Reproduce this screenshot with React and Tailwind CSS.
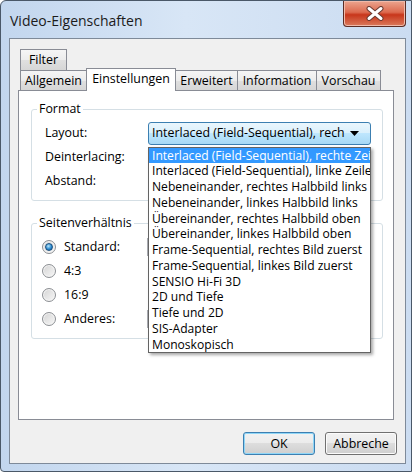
const layouts = [
  'Interlaced (Field-Sequential), rechte Zeile zuerst',
  'Interlaced (Field-Sequential), linke Zeile zuerst',
  'Nebeneinander, rechtes Halbbild links',
  'Nebeneinander, linkes Halbbild links',
  'Übereinander, rechtes Halbbild oben',
  'Übereinander, linkes Halbbild oben',
  'Frame-Sequential, rechtes Bild zuerst',
  'Frame-Sequential, linkes Bild zuerst',
  'SENSIO Hi-Fi 3D',
  '2D und Tiefe',
  'Tiefe und 2D',
  'SIS-Adapter',
  'Monoskopisch',
];

const tabGradient = 'bg-[linear-gradient(#f5f5f5,#ececec_50%,#e0e0e0_50%,#d6d6d6)]';
const btnGradient = 'bg-[linear-gradient(#f2f2f2,#ebebeb_50%,#dddddd_50%,#cfcfcf)]';

function Tab({ label, className = '' }) {
  return (
    <div className={`h-[20px] border border-b-0 border-[#898c95] ${tabGradient} flex items-center justify-center pt-[1px] whitespace-nowrap ${className}`}>
      {label}
    </div>
  );
}

function Group({ label, className = '', children }) {
  return (
    <div className={`relative border border-[#d5dfe5] rounded-[3px] ${className}`}>
      <span className="absolute left-[5px] -top-[9px] px-[2px] bg-white leading-[16px]">{label}</span>
      {children}
    </div>
  );
}

function Radio({ checked, label, withBox }) {
  return (
    <div className="h-[24px] flex items-center">
      <div className="w-[105px] flex items-center">
        <span className="w-[14px] h-[14px] rounded-full border border-[#8c8f93] bg-[linear-gradient(135deg,#d4d4d4,#f7f7f7)] flex items-center justify-center shadow-[inset_0_0_0_1px_#f4f4f4]">
          {checked && (
            <span className="w-[8px] h-[8px] rounded-full border border-[#1c5180] bg-[radial-gradient(circle_at_40%_35%,#b9e6fb,#2b8bd0_55%,#0f4f8a)]" />
          )}
        </span>
        <span className="ml-[8px]">{label}</span>
      </div>
      {withBox && <div className="w-[150px] h-[18px] border border-[#abadb3] bg-white" />}
    </div>
  );
}

function Button({ label, isDefault }) {
  return (
    <button
      className={`w-[72px] h-[23px] rounded-[3px] border ${btnGradient} ${
        isDefault ? 'border-[#3c7fb1] shadow-[inset_0_0_0_1px_#8fd6f7]' : 'border-[#707070] shadow-[inset_0_0_0_1px_#fbfbfb]'
      } leading-[20px]`}
    >
      {label}
    </button>
  );
}

function App() {
  return (
    <div className="w-[412px] h-[474px] bg-white font-['Segoe_UI','Open_Sans',sans-serif] text-[12.4px] text-black">
      <div className="h-[472px] flex flex-col border border-[#4a5868] rounded-tl-[6px] rounded-bl-[4px] bg-[linear-gradient(90deg,#c2d6ee,#d8e6f6_45%,#cbdcf1)]">
        {/* title bar */}
        <div className="h-[37px] flex justify-between items-start pl-[9px] pr-[5px]">
          <span className="mt-[10px] text-[14px] leading-[20px] text-[#1b1b1b]">Video-Eigenschaften</span>
          <div className="w-[63px] h-[26px] rounded-b-[4px] border border-t-0 border-[#5b2c24] bg-[linear-gradient(#eba58f,#dc6a4f_45%,#c8361b_55%,#da7a5c)] flex items-center justify-center shadow-[inset_0_0_0_1px_#f0b9a9]">
            <svg width="20" height="15" viewBox="0 0 20 15">
              <path d="M4 2.5 L16 12.5 M16 2.5 L4 12.5" stroke="#6b3a31" strokeWidth="5" strokeLinecap="round" />
              <path d="M4 2.5 L16 12.5 M16 2.5 L4 12.5" stroke="#ffffff" strokeWidth="3" strokeLinecap="round" />
            </svg>
          </div>
        </div>

        {/* client area */}
        <div className="pl-[8px] pr-[5px]">
          <div className="h-[426px] border border-[#7e8a99] bg-[#f0f0f0] pl-[8px] pr-[9px] pt-[10px] flex flex-col">
            {/* tab rows */}
            <div className="pl-[2px]">
              <Tab label="Filter" className="w-[47px] h-[21px]" />
            </div>
            <div className="pl-[2px] flex items-end h-[20px]">
              <Tab label="Allgemein" className="w-[67px]" />
              <div className="relative z-10 -ml-[1px] -mt-[2px] -mb-[1px] w-[90px] h-[23px] border border-b-0 border-[#898c95] bg-white flex items-center justify-center pb-[2px]">
                Einstellungen
              </div>
              <Tab label="Erweitert" className="w-[63px] -ml-[1px]" />
              <Tab label="Information" className="w-[80px] -ml-[1px]" />
              <Tab label="Vorschau" className="w-[65px] -ml-[1px]" />
            </div>

            {/* tab pane */}
            <div className="w-[376px] h-[330px] border border-[#898c95] bg-white pl-[12px] pr-[10px] pt-[18px]">
              <Group label="Format" className="h-[92px] pt-[11px] pl-[13px]">
                <div className="h-[24px] flex items-center">
                  <span className="w-[103px]">Layout:</span>
                  <div className="relative">
                    <div className="w-[223px] h-[23px] rounded-[3px] border border-[#3c7fb1] bg-[linear-gradient(#eaf6fd,#d9f0fc_50%,#bee6fd_50%,#a7d9f5)] flex items-center pl-[3px] pr-[11px] justify-between">
                      <span className="whitespace-nowrap">Interlaced (Field-Sequential), rech</span>
                      <svg width="9" height="5" viewBox="0 0 9 5">
                        <path d="M0 0 H9 L4.5 5 Z" fill="#000" />
                      </svg>
                    </div>
                    <div className="absolute z-20 left-0 top-[25px] w-[223px] border border-[#646464] bg-white shadow-[2px_2px_3px_rgba(0,0,0,0.35)] text-[12.1px]">
                      {layouts.map((l, i) => (
                        <div
                          key={l}
                          className={`h-[15.77px] leading-[15px] pl-[3px] whitespace-nowrap overflow-hidden ${
                            i === 0 ? 'bg-[#3399ff] text-white' : ''
                          }`}
                        >
                          {l}
                        </div>
                      ))}
                    </div>
                  </div>
                </div>
                <div className="h-[24px] flex items-center">
                  <span className="w-[103px]">Deinterlacing:</span>
                </div>
                <div className="h-[24px] flex items-center">
                  <span className="w-[103px]">Abstand:</span>
                </div>
              </Group>

              <Group label="Seitenverhältnis" className="mt-[22px] h-[116px] pt-[11px] pl-[10px]">
                <Radio checked label="Standard:" withBox />
                <Radio label="4:3" />
                <Radio label="16:9" />
                <Radio label="Anderes:" withBox />
              </Group>
            </div>

            {/* buttons */}
            <div className="mt-[12px] flex justify-end gap-[10px] -mr-[1px]">
              <Button label="OK" isDefault />
              <Button label="Abbreche" />
            </div>
          </div>
        </div>
      </div>
    </div>
  );
}

export default App;
